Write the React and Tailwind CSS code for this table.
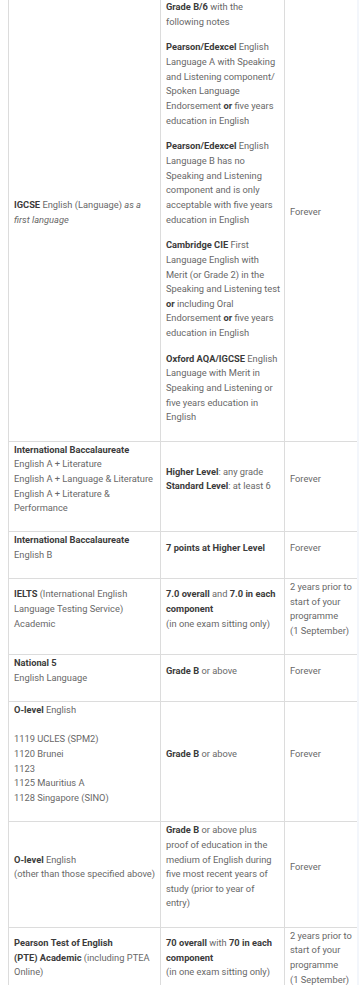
const rows = [
  {
    a: (
      <>
        <b>IGCSE</b> English (Language) <i>as a first language</i>
      </>
    ),
    b: [
      <>
        <b>Grade B/6</b> with the following notes
      </>,
      <>
        <b>Pearson/Edexcel</b> English Language A with Speaking and Listening
        component/ Spoken Language Endorsement <b>or</b> five years education
        in English
      </>,
      <>
        <b>Pearson/Edexcel</b> English Language B has no Speaking and Listening
        component and is only acceptable with five years education in English
      </>,
      <>
        <b>Cambridge CIE</b> First Language English with Merit (or Grade 2) in
        the Speaking and Listening test <b>or</b> including Oral Endorsement{" "}
        <b>or</b> five years education in English
      </>,
      <>
        <b>Oxford AQA/IGCSE</b> English Language with Merit in Speaking and
        Listening or five years education in English
      </>,
    ],
    c: "Forever",
  },
  {
    a: (
      <>
        <b>International Baccalaureate</b>
        <br />
        English A + Literature
        <br />
        English A + Language &amp; Literature
        <br />
        English A + Literature &amp; Performance
      </>
    ),
    b: [
      <>
        <b>Higher Level</b>: any grade
        <br />
        <b>Standard Level</b>: at least 6
      </>,
    ],
    c: "Forever",
  },
  {
    a: (
      <>
        <b>International Baccalaureate</b>
        <br />
        English B
      </>
    ),
    b: [<b>7 points at Higher Level</b>],
    c: "Forever",
  },
  {
    a: (
      <>
        <b>IELTS</b> (International English Language Testing Service)
        <br />
        Academic
      </>
    ),
    b: [
      <>
        <b>7.0 overall</b> and <b>7.0 in each component</b>
        <br />
        (in one exam sitting only)
      </>,
    ],
    c: (
      <>
        2 years prior to start of your programme
        <br />
        (1 September)
      </>
    ),
  },
  {
    a: (
      <>
        <b>National 5</b>
        <br />
        English Language
      </>
    ),
    b: [
      <>
        <b>Grade B</b> or above
      </>,
    ],
    c: "Forever",
  },
  {
    a: (
      <>
        <b>O-level</b> English
        <br />
        <br />
        1119 UCLES (SPM2)
        <br />
        1120 Brunei
        <br />
        1123
        <br />
        1125 Mauritius A
        <br />
        1128 Singapore (SINO)
      </>
    ),
    b: [
      <>
        <b>Grade B</b> or above
      </>,
    ],
    c: "Forever",
  },
  {
    a: (
      <>
        <b>O-level</b> English
        <br />
        (other than those specified above)
      </>
    ),
    b: [
      <>
        <b>Grade B</b> or above plus proof of education in the medium of
        English during five most recent years of study (prior to year of
        entry)
      </>,
    ],
    c: "Forever",
  },
  {
    a: (
      <>
        <b>Pearson Test of English</b>
        <br />
        <b>(PTE) Academic</b> (including PTEA Online)
      </>
    ),
    b: [
      <>
        <b>70 overall</b> with <b>70 in each component</b>
        <br />
        (in one exam sitting only)
      </>,
    ],
    c: (
      <>
        2 years prior to start of your programme
        <br />
        (1 September)
      </>
    ),
  },
];

const cell =
  "border border-[#dcdcdc] pl-[5px] pr-[4px] pt-[1px] pb-[4.5px] align-middle";

const App = () => {
  return (
    <div className="h-[985px] overflow-hidden bg-white flex font-[Roboto,sans-serif] text-[9.3px] leading-[14.65px] text-[#686868] [&_b]:font-bold [&_b]:text-[#3b3b3b]">
      <div className="w-[8px] shrink-0" />
      <div className="w-[349px] shrink-0">
        <table className="w-[349px] table-fixed border-collapse -mt-[2px]">
          <colgroup>
            <col className="w-[152px]" />
            <col className="w-[124px]" />
            <col className="w-[73px]" />
          </colgroup>
          <tbody>
            {rows.map((row, index) => (
              <tr key={index}>
                <td className={cell}>
                  <p className="mb-[11px]">{row.a}</p>
                </td>
                <td className={cell}>
                  {row.b.map((para, i) => (
                    <p key={i} className="mb-[11px]">
                      {para}
                    </p>
                  ))}
                </td>
                <td className={cell}>
                  <p className="mb-[11px]">{row.c}</p>
                </td>
              </tr>
            ))}
          </tbody>
        </table>
      </div>
      <div className="flex-1 bg-[#f3f6fb]" />
    </div>
  );
};

export default App;
